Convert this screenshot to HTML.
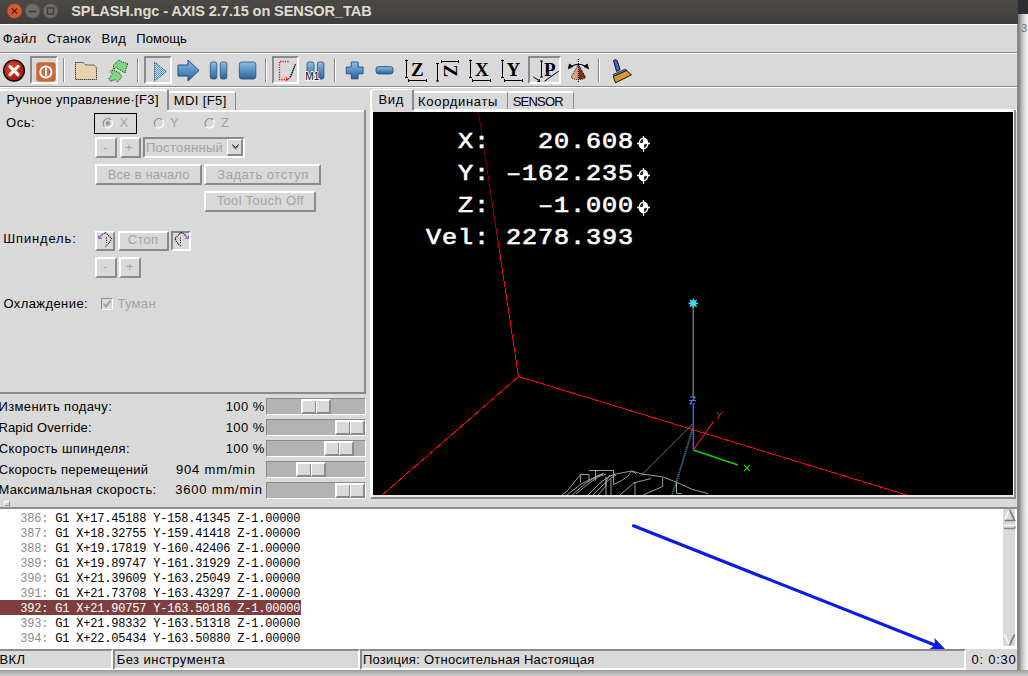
<!DOCTYPE html>
<html><head><meta charset="utf-8">
<style>
*{margin:0;padding:0;box-sizing:border-box}
html,body{width:1028px;height:676px;overflow:hidden;background:#d9d9d9;font-family:"Liberation Sans",sans-serif;font-size:13px;color:#000}
.a{position:absolute}
.t{position:absolute;white-space:pre;line-height:1}
svg{position:absolute;overflow:visible}
</style></head><body>
<div class="a" style="left:0px;top:0px;width:1018px;height:24px;background:linear-gradient(180deg,#4a4945 0,#454440 50%,#3e3d39 100%);"></div>
<svg class="a" style="left:0;top:0" width="80" height="24"><circle cx="14.5" cy="11" r="7.3" fill="#d65a30" stroke="#a8401c" stroke-width="0.6"/><path d="M11.8 8.3l5.4 5.4M17.2 8.3l-5.4 5.4" stroke="#3a1a10" stroke-width="1.2"/><circle cx="32.5" cy="11" r="7.3" fill="#6c6b67" stroke="#555450" stroke-width="0.6"/><path d="M29 11.5h7" stroke="#3c3b37" stroke-width="1.6"/><circle cx="50.5" cy="11" r="7.3" fill="#6c6b67" stroke="#555450" stroke-width="0.6"/><rect x="47.5" y="8" width="6" height="6" fill="none" stroke="#3c3b37" stroke-width="1.3"/></svg>
<div class="t" style="left:71.20px;top:3.64px;font-size:14.6px;color:#dfdbd2;font-weight:700;letter-spacing:-0.119px;">SPLASH.ngc - AXIS 2.7.15 on SENSOR_TAB</div>
<div class="a" style="left:0px;top:24px;width:1018px;height:1px;background:#fff;"></div>
<div class="a" style="left:0px;top:25px;width:1018px;height:27px;background:#d9d9d9;"></div>
<div class="a" style="left:0px;top:52px;width:1018px;height:1px;background:#8a8a8a;"></div>
<div class="t" style="left:2.80px;top:31.99px;font-size:13px;color:#000;letter-spacing:0.500px;">Файл</div>
<div class="t" style="left:46.70px;top:31.99px;font-size:13px;color:#000;letter-spacing:0.260px;">Станок</div>
<div class="t" style="left:101.50px;top:31.99px;font-size:13px;color:#000;letter-spacing:0.350px;">Вид</div>
<div class="t" style="left:136.20px;top:31.99px;font-size:13px;color:#000;letter-spacing:0.100px;">Помощь</div>
<div class="a" style="left:0px;top:53px;width:1018px;height:1px;background:#fff;"></div>
<div class="a" style="left:0px;top:86px;width:1018px;height:1px;background:#8a8a8a;"></div>
<div class="a" style="left:0px;top:87px;width:1018px;height:1px;background:#fff;"></div>
<div class="a" style="left:63px;top:58px;width:1px;height:24px;background:#8a8a8a;"></div>
<div class="a" style="left:64px;top:58px;width:1px;height:24px;background:#fff;"></div>
<div class="a" style="left:137px;top:58px;width:1px;height:24px;background:#8a8a8a;"></div>
<div class="a" style="left:138px;top:58px;width:1px;height:24px;background:#fff;"></div>
<div class="a" style="left:265px;top:58px;width:1px;height:24px;background:#8a8a8a;"></div>
<div class="a" style="left:266px;top:58px;width:1px;height:24px;background:#fff;"></div>
<div class="a" style="left:334px;top:58px;width:1px;height:24px;background:#8a8a8a;"></div>
<div class="a" style="left:335px;top:58px;width:1px;height:24px;background:#fff;"></div>
<div class="a" style="left:598px;top:58px;width:1px;height:24px;background:#8a8a8a;"></div>
<div class="a" style="left:599px;top:58px;width:1px;height:24px;background:#fff;"></div>
<div class="a" style="left:30px;top:56px;width:28px;height:28px;border-style:solid;border-width:2px;border-color:#8a8a8a #fff #fff #8a8a8a;"></div>
<div class="a" style="left:144px;top:56px;width:28px;height:28px;border-style:solid;border-width:2px;border-color:#8a8a8a #fff #fff #8a8a8a;"></div>
<div class="a" style="left:272px;top:56px;width:27px;height:28px;border-style:solid;border-width:2px;border-color:#8a8a8a #fff #fff #8a8a8a;"></div>
<div class="a" style="left:528px;top:56px;width:33px;height:28px;border-style:solid;border-width:2px;border-color:#8a8a8a #fff #fff #8a8a8a;"></div>
<svg style="left:0;top:0" width="640" height="90">
<defs>
<linearGradient id="gblue" x1="0" y1="0" x2="0" y2="1"><stop offset="0" stop-color="#8cc0e6"/><stop offset="1" stop-color="#2a6199"/></linearGradient>
<radialGradient id="gred" cx="0.4" cy="0.35" r="0.7"><stop offset="0" stop-color="#e83a2a"/><stop offset="1" stop-color="#9a1a10"/></radialGradient>
<linearGradient id="gcone" x1="0" y1="0" x2="1" y2="0"><stop offset="0" stop-color="#f0b090"/><stop offset="0.5" stop-color="#c86040"/><stop offset="1" stop-color="#702010"/></linearGradient>
<pattern id="pdot" width="2" height="2" patternUnits="userSpaceOnUse"><rect width="1" height="1" fill="#4a98d0"/><rect x="1" y="1" width="1" height="1" fill="#4a98d0"/></pattern>
</defs>
<circle cx="14" cy="70.6" r="10.4" fill="url(#gred)" stroke="#000" stroke-width="1.3"/>
<path d="M10 66.5l8 8.2M18 66.5l-8 8.2" stroke="#fff" stroke-width="3.2" stroke-linecap="round"/>
<rect x="36.2" y="62.2" width="19.5" height="19.5" rx="3" fill="#c9683c"/>
<circle cx="45.9" cy="72" r="5.6" fill="none" stroke="#fff" stroke-width="1.9"/>
<path d="M45.9 67.5v8.5" stroke="#fff" stroke-width="1.9"/>
<path d="M75.5 62.5h7.5l3 2.5h8l2.5 3v11.5h-21z" fill="#e6d2b0" stroke="#000" stroke-width="1" stroke-dasharray="1 1"/>
<path d="M113.5 65l5.5-5 3 2 6 1.5 -1.5 3.5 -1.5 6 -4-2.5 -3.5-2 -1 -1.5 -3 2.5z" fill="#7ed87e" stroke="#000" stroke-width="0.9" stroke-dasharray="0.9 1.1"/>
<path d="M109 78.5l3.5-4.5 -2.5-2.5 1.5-1.5 4 1 4.5 2.5 2 3.5 -4.5 5 -2.5-2.5 -4 2z" fill="#7ed87e" stroke="#000" stroke-width="0.9" stroke-dasharray="0.9 1.1"/>
<path d="M154.5 62l11.8 9.5 -11.8 9.8z" fill="url(#pdot)" stroke="#1a4570" stroke-width="1" stroke-dasharray="1 1"/>
<path d="M178 65h10v-5l11 10.5 -11 10.5v-5h-10z" fill="url(#gblue)" stroke="#1d4f80" stroke-width="1"/>
<rect x="210.3" y="62" width="6.5" height="17" rx="2" fill="url(#gblue)" stroke="#1d4f80" stroke-width="0.8"/>
<rect x="220.3" y="62" width="6.5" height="17" rx="2" fill="url(#gblue)" stroke="#1d4f80" stroke-width="0.8"/>
<rect x="239.3" y="62" width="16.5" height="17" rx="2.5" fill="url(#gblue)" stroke="#1d4f80" stroke-width="0.8"/>
<path d="M288.5 61.5h-9v18h8.5l1.5-1.5" fill="none" stroke="#f00" stroke-width="1.3" stroke-dasharray="1.2 1.2"/>
<path d="M285.5 76.8l2.5 2.6 -2.3 1.3" fill="none" stroke="#f00" stroke-width="1"/>
<path d="M295.5 64.2l-5.5 13.7" stroke="#000" stroke-width="1.4" stroke-dasharray="1.5 0.6"/>
<rect x="307" y="62" width="7" height="17" rx="2" fill="url(#gblue)" stroke="#1d4f80" stroke-width="0.8"/>
<rect x="317.4" y="62" width="6.5" height="17" rx="2" fill="url(#gblue)" stroke="#1d4f80" stroke-width="0.8"/>
<text x="305.3" y="79.8" font-family="Liberation Sans" font-size="10" fill="#000" stroke="#fff" stroke-width="1.6" paint-order="stroke">M1</text>
<path d="M351.3 62h6.8v5h5v6.8h-5v5h-6.8v-5h-5v-6.8h5z" fill="url(#gblue)" stroke="#1d4f80" stroke-width="0.9"/>
<rect x="376" y="66.7" width="17" height="7.2" rx="2.5" fill="url(#gblue)" stroke="#1d4f80" stroke-width="0.9"/>
<g stroke="#000" stroke-width="1" fill="none">
<path d="M406.5 59.7v17.7M405 60.5h3M405 77.5h3M408 80.5h18.5M408.5 79v3M426.5 79v3"/>
<path d="M437.5 63v18.5M436 63.5h3M436 81h3M441 61.5h17.5M441.5 60v3M458.5 60v3"/>
<path d="M470.5 59.7v17.7M469 60.5h3M469 77.5h3M472 80.5h18.5M472.5 79v3M490.5 79v3"/>
<path d="M502.5 59.7v17.7M501 60.5h3M501 77.5h3M504 80.5h19M504.5 79v3M522.5 79v3"/>
<path d="M541.5 61v16M540 61h3M540 77h3"/>
<path d="M533.5 77l6.5 4.2M537 81.5h3l-1-2.5M544.5 81.2l14.2-10"/>
</g>
<g font-family="Liberation Serif" font-weight="bold" fill="#000" font-size="19">
<text x="411" y="75.6">Z</text>
<text x="475" y="75.6">X</text>
<text x="506.5" y="75.6">Y</text>
<text x="544" y="75.6">P</text>
<text x="0" y="0" transform="translate(443.5,64.5) rotate(90)">Z</text>
</g>
<path d="M578.4 64.4L571.3 77a7.1 2.6 0 0 0 7.1 2.6z" fill="#e0a080"/>
<path d="M578.4 64.4L585.5 77a7.1 2.6 0 0 1 -7.1 2.6z" fill="#8a2a10"/>
<path d="M578.4 64.4L571.3 77a7.1 2.6 0 0 0 14.2 0z" fill="none" stroke="#000" stroke-width="0.9" stroke-dasharray="1 1"/>
<path d="M578.4 59v24" stroke="#000" stroke-width="1.1" stroke-dasharray="1 1"/>
<path d="M571.5 66.5q7-4.5 14 0" fill="none" stroke="#000" stroke-width="1.1"/>
<path d="M568.3 68.8l1.2-4.8 3.4 2.6z M588.5 68.8l-1.2-4.8 -3.4 2.6z" fill="#000" stroke="#000" stroke-width="0.8"/>
<path d="M613.5 60.5q1.8-1.6 3.6 0l3 9 -3.5 2z" fill="#3a6fd0" stroke="#000" stroke-width="0.9"/>
<path d="M613 74.5l12.5-5.5 1.5 1.5 -13 6z" fill="#4a8ae0" stroke="#000" stroke-width="0.6"/>
<path d="M613.3 76.5l13.2-6 5 4.3 -16 8z" fill="#d8982c" stroke="#000" stroke-width="0.9"/>
</svg>
<div class="a" style="left:167px;top:110px;width:198px;height:2px;background:#fff;"></div>
<div class="a" style="left:364px;top:110px;width:2px;height:284px;background:#8a8a8a;"></div>
<div class="a" style="left:0px;top:392px;width:366px;height:2px;background:#8a8a8a;"></div>
<div class="a" style="left:169px;top:91px;width:67px;height:19px;border-top:2px solid #fff;border-right:1px solid #8a8a8a;border-top-right-radius:3px;"></div>
<div class="a" style="left:0px;top:89px;width:167px;height:21px;border-top:2px solid #fff;border-top-right-radius:3px;"></div>
<div class="a" style="left:167px;top:90px;width:2px;height:20px;background:#8a8a8a;"></div>
<div class="t" style="left:6.50px;top:92.89px;font-size:13px;color:#000;letter-spacing:0.333px;">Ручное управление·[F3]</div>
<div class="t" style="left:173.80px;top:93.99px;font-size:13px;color:#000;letter-spacing:0.386px;">MDI [F5]</div>
<div class="t" style="left:6.00px;top:116.49px;font-size:13px;color:#000;letter-spacing:0.567px;">Ось:</div>
<div class="a" style="left:94px;top:113px;width:43px;height:21px;border:1.5px solid #000;"></div>
<svg style="left:0;top:0" width="370" height="320">
<g fill="none" stroke-width="1.2"><path d="M104.41 126.69A4.8 4.8 0 0 1 111.19 119.91" stroke="#8a8a8a"/><path d="M111.19 119.91A4.8 4.8 0 0 1 104.41 126.69" stroke="#fff"/><path d="M155.51 126.69A4.8 4.8 0 0 1 162.29 119.91" stroke="#8a8a8a"/><path d="M162.29 119.91A4.8 4.8 0 0 1 155.51 126.69" stroke="#fff"/><path d="M206.31 126.69A4.8 4.8 0 0 1 213.09 119.91" stroke="#8a8a8a"/><path d="M213.09 119.91A4.8 4.8 0 0 1 206.31 126.69" stroke="#fff"/></g>
<circle cx="107.8" cy="123.3" r="2.2" fill="#9a9a9a"/>
</svg>
<div class="t" style="left:119.60px;top:116.49px;font-size:13px;color:#a3a3a3;">X</div>
<div class="t" style="left:170.00px;top:116.49px;font-size:13px;color:#a3a3a3;">Y</div>
<div class="t" style="left:220.90px;top:116.49px;font-size:13px;color:#a3a3a3;">Z</div>
<div class="a" style="left:95px;top:137px;width:22px;height:21px;border-style:solid;border-width:2px;border-color:#fff #8a8a8a #8a8a8a #fff;"></div>
<div class="a" style="left:120px;top:137px;width:21px;height:21px;border-style:solid;border-width:2px;border-color:#fff #8a8a8a #8a8a8a #fff;"></div>
<div class="t" style="left:102.90px;top:140.59px;font-size:13px;color:#a3a3a3;">-</div>
<div class="t" style="left:124.90px;top:140.59px;font-size:13px;color:#a3a3a3;">+</div>
<div class="a" style="left:143px;top:137px;width:102px;height:21px;border-style:solid;border-width:2px;border-color:#8a8a8a #fff #fff #8a8a8a;"></div>
<div class="t" style="left:145.90px;top:140.59px;font-size:13px;color:#a3a3a3;letter-spacing:0.311px;">Постоянный</div>
<div class="a" style="left:227px;top:139px;width:16px;height:17px;border-style:solid;border-width:1px 2px 2px 1px;border-color:#fff #8a8a8a #8a8a8a #fff;"></div>
<svg style="left:0;top:0" width="260" height="160"><path d="M232 144.5l3.5 2.8 3.5-2.8M233 146.5l2.5 2.3 2.5-2.3" fill="none" stroke="#000" stroke-width="0.8"/></svg>
<div class="a" style="left:95px;top:164px;width:107px;height:21px;border-style:solid;border-width:2px;border-color:#fff #8a8a8a #8a8a8a #fff;"></div>
<div class="t" style="left:107.70px;top:167.59px;font-size:13px;color:#a3a3a3;letter-spacing:0.200px;">Все в начало</div>
<div class="a" style="left:204px;top:164px;width:117px;height:21px;border-style:solid;border-width:2px;border-color:#fff #8a8a8a #8a8a8a #fff;"></div>
<div class="t" style="left:217.30px;top:167.69px;font-size:13px;color:#a3a3a3;letter-spacing:0.517px;">Задать отступ</div>
<div class="a" style="left:204px;top:191px;width:112px;height:21px;border-style:solid;border-width:2px;border-color:#fff #8a8a8a #8a8a8a #fff;"></div>
<div class="t" style="left:216.70px;top:194.19px;font-size:13px;color:#a3a3a3;letter-spacing:0.338px;">Tool Touch Off</div>
<div class="t" style="left:3.30px;top:232.29px;font-size:13px;color:#000;letter-spacing:0.838px;">Шпиндель:</div>
<div class="a" style="left:95px;top:231px;width:20px;height:20px;border-style:solid;border-width:2px;border-color:#fff #8a8a8a #8a8a8a #fff;"></div>
<div class="a" style="left:118px;top:231px;width:51px;height:20px;border-style:solid;border-width:2px;border-color:#fff #8a8a8a #8a8a8a #fff;"></div>
<div class="t" style="left:127.80px;top:233.29px;font-size:13px;color:#a3a3a3;letter-spacing:0.267px;">Стоп</div>
<div class="a" style="left:171px;top:231px;width:20px;height:20px;border-style:solid;border-width:2px;border-color:#8a8a8a #fff #fff #8a8a8a;"></div>
<svg style="left:0;top:0" width="200" height="260">
<path d="M102 234.5L105.5 232.5L111.5 238.5L110 242L105.5 246.5" fill="none" stroke="#000" stroke-width="1.1" stroke-dasharray="1.1 0.9"/>
<path d="M98.5 238.5L102.5 234.5M98.5 238.5h3.5M98.5 238.5v-3" fill="none" stroke="#9a5cc0" stroke-width="1.1"/>
<path d="M106.5 237.5v6.5" stroke="#000" stroke-width="1.1" stroke-dasharray="1.1 1.1"/>
<path d="M185.5 234.5L181 232.5L175 238.5L176.5 242L181 246.5" fill="none" stroke="#000" stroke-width="1.1" stroke-dasharray="1.1 0.9"/>
<path d="M188.5 238.5L184 234.5M188.5 238.5h-3.5M188.5 238.5v-3" fill="none" stroke="#9a5cc0" stroke-width="1.1"/>
<path d="M180.5 237.5v6.5" stroke="#000" stroke-width="1.1" stroke-dasharray="1.1 1.1"/>
</svg>
<div class="a" style="left:95px;top:257px;width:22px;height:21px;border-style:solid;border-width:2px;border-color:#fff #8a8a8a #8a8a8a #fff;"></div>
<div class="a" style="left:119px;top:257px;width:22px;height:21px;border-style:solid;border-width:2px;border-color:#fff #8a8a8a #8a8a8a #fff;"></div>
<div class="t" style="left:102.90px;top:259.59px;font-size:13px;color:#a3a3a3;">-</div>
<div class="t" style="left:125.90px;top:259.59px;font-size:13px;color:#a3a3a3;">+</div>
<div class="t" style="left:3.40px;top:296.99px;font-size:13px;color:#000;letter-spacing:0.420px;">Охлаждение:</div>
<div class="a" style="left:101px;top:298px;width:12px;height:12px;border-style:solid;border-width:1px;border-color:#8a8a8a #fff #fff #8a8a8a;"></div>
<svg style="left:0;top:0" width="130" height="320"><path d="M103.5 303.5l2.5 3 4.5-6" fill="none" stroke="#9a9a9a" stroke-width="1.6"/></svg>
<div class="t" style="left:117.40px;top:296.99px;font-size:13px;color:#a3a3a3;letter-spacing:0.325px;">Туман</div>
<div class="t" style="left:-1.60px;top:400.29px;font-size:13px;color:#000;letter-spacing:0.380px;">Изменить подачу:</div>
<div class="t" style="left:225.70px;top:400.29px;font-size:13px;color:#000;letter-spacing:0.425px;">100 %</div>
<div class="a" style="left:266px;top:398px;width:100px;height:17px;background:#b3b3b3;border-style:solid;border-width:1px;border-color:#8a8a8a #fff #fff #8a8a8a;"></div>
<div class="a" style="left:301px;top:399px;width:30px;height:15px;background:#d9d9d9;border-style:solid;border-width:2px;border-color:#fff #8a8a8a #8a8a8a #fff;"></div>
<div class="a" style="left:315px;top:401px;width:1px;height:12px;background:#8a8a8a;"></div>
<div class="a" style="left:316px;top:401px;width:1px;height:12px;background:#fff;"></div>
<div class="t" style="left:-1.60px;top:421.04px;font-size:13px;color:#000;letter-spacing:0.150px;">Rapid Override:</div>
<div class="t" style="left:225.70px;top:421.04px;font-size:13px;color:#000;letter-spacing:0.425px;">100 %</div>
<div class="a" style="left:266px;top:419px;width:100px;height:17px;background:#b3b3b3;border-style:solid;border-width:1px;border-color:#8a8a8a #fff #fff #8a8a8a;"></div>
<div class="a" style="left:335px;top:420px;width:30px;height:15px;background:#d9d9d9;border-style:solid;border-width:2px;border-color:#fff #8a8a8a #8a8a8a #fff;"></div>
<div class="a" style="left:349px;top:422px;width:1px;height:12px;background:#8a8a8a;"></div>
<div class="a" style="left:350px;top:422px;width:1px;height:12px;background:#fff;"></div>
<div class="t" style="left:-1.20px;top:441.79px;font-size:13px;color:#000;letter-spacing:0.382px;">Скорость шпинделя:</div>
<div class="t" style="left:225.70px;top:441.79px;font-size:13px;color:#000;letter-spacing:0.425px;">100 %</div>
<div class="a" style="left:266px;top:440px;width:100px;height:17px;background:#b3b3b3;border-style:solid;border-width:1px;border-color:#8a8a8a #fff #fff #8a8a8a;"></div>
<div class="a" style="left:324px;top:441px;width:30px;height:15px;background:#d9d9d9;border-style:solid;border-width:2px;border-color:#fff #8a8a8a #8a8a8a #fff;"></div>
<div class="a" style="left:338px;top:443px;width:1px;height:12px;background:#8a8a8a;"></div>
<div class="a" style="left:339px;top:443px;width:1px;height:12px;background:#fff;"></div>
<div class="t" style="left:-1.20px;top:462.54px;font-size:13px;color:#000;letter-spacing:0.263px;">Скорость перемещений</div>
<div class="t" style="left:175.90px;top:462.54px;font-size:13px;color:#000;letter-spacing:0.844px;">904 mm/min</div>
<div class="a" style="left:266px;top:461px;width:100px;height:17px;background:#b3b3b3;border-style:solid;border-width:1px;border-color:#8a8a8a #fff #fff #8a8a8a;"></div>
<div class="a" style="left:296px;top:462px;width:30px;height:15px;background:#d9d9d9;border-style:solid;border-width:2px;border-color:#fff #8a8a8a #8a8a8a #fff;"></div>
<div class="a" style="left:310px;top:464px;width:1px;height:12px;background:#8a8a8a;"></div>
<div class="a" style="left:311px;top:464px;width:1px;height:12px;background:#fff;"></div>
<div class="t" style="left:-1.60px;top:483.29px;font-size:13px;color:#000;letter-spacing:0.357px;">Максимальная скорость:</div>
<div class="t" style="left:175.20px;top:483.29px;font-size:13px;color:#000;letter-spacing:0.810px;">3600 mm/min</div>
<div class="a" style="left:266px;top:482px;width:100px;height:17px;background:#b3b3b3;border-style:solid;border-width:1px;border-color:#8a8a8a #fff #fff #8a8a8a;"></div>
<div class="a" style="left:335px;top:483px;width:30px;height:15px;background:#d9d9d9;border-style:solid;border-width:2px;border-color:#fff #8a8a8a #8a8a8a #fff;"></div>
<div class="a" style="left:349px;top:485px;width:1px;height:12px;background:#8a8a8a;"></div>
<div class="a" style="left:350px;top:485px;width:1px;height:12px;background:#fff;"></div>
<div class="a" style="left:4px;top:501px;width:6px;height:5px;border-style:solid;border-width:1px;border-color:#fff #8a8a8a #8a8a8a #fff;"></div>
<div class="a" style="left:414px;top:91px;width:94px;height:19px;border-top:2px solid #fff;border-right:1px solid #8a8a8a;border-top-right-radius:3px;"></div>
<div class="a" style="left:508px;top:91px;width:66px;height:19px;border-top:2px solid #fff;border-right:1px solid #8a8a8a;border-top-right-radius:3px;"></div>
<div class="a" style="left:414px;top:109px;width:604px;height:3px;background:#fff;"></div>
<div class="a" style="left:370px;top:89px;width:42px;height:21px;border-top:1px solid #fff;border-left:2px solid #fff;border-top-left-radius:4px;"></div>
<div class="a" style="left:412px;top:90px;width:2px;height:20px;background:#8a8a8a;"></div>
<div class="a" style="left:370px;top:109px;width:3px;height:389px;background:#fff;"></div>
<div class="a" style="left:373px;top:112px;width:640px;height:383px;background:#000;"></div>
<div class="a" style="left:373px;top:495px;width:641px;height:2px;background:#e6e6e6;"></div>
<div class="a" style="left:1013px;top:112px;width:1px;height:385px;background:#fff;"></div>
<div class="a" style="left:1014px;top:110px;width:2px;height:389px;background:#8a8a8a;"></div>
<div class="a" style="left:371px;top:497px;width:645px;height:2px;background:#8a8a8a;"></div>
<div class="t" style="left:378.60px;top:93.29px;font-size:13px;color:#000;letter-spacing:0.600px;">Вид</div>
<div class="t" style="left:418.10px;top:94.79px;font-size:13px;color:#000;letter-spacing:0.678px;">Координаты</div>
<div class="t" style="left:512.70px;top:94.79px;font-size:13px;color:#000;letter-spacing:-0.800px;">SENSOR</div>
<svg style="left:373px;top:112px;overflow:hidden" width="640" height="383" viewBox="373 112 640 383">
<defs><linearGradient id="gredline" gradientUnits="userSpaceOnUse" x1="0" y1="112" x2="0" y2="380"><stop offset="0" stop-color="#5a0000"/><stop offset="0.4" stop-color="#8a0000"/><stop offset="0.55" stop-color="#ff0000"/><stop offset="1" stop-color="#ff0000"/></linearGradient></defs>
<path d="M478.3 111L518.5 376.5" stroke="url(#gredline)" stroke-width="1" fill="none" shape-rendering="crispEdges"/>
<path d="M381 496L518.5 376.5L910 496" stroke="#f00" stroke-width="1" fill="none" shape-rendering="crispEdges"/>
<path d="M693.3 305V398" stroke="#5f6c70" stroke-width="1.6"/>
<g stroke="#40d8f8" stroke-width="1.3"><path d="M688.5 303.3h9.6M693.3 298.5v9.6M689.9 299.9l6.8 6.8M696.7 299.9l-6.8 6.8"/></g><circle cx="693.3" cy="303.3" r="3.2" fill="#40d8f8"/>
<path d="M693.3 405V450" stroke="#3a6ae0" stroke-width="1.4"/>
<path d="M693.3 450L738 465" stroke="#10d010" stroke-width="1.4"/>
<path d="M693.3 450L713.5 421.5" stroke="#e82020" stroke-width="1.2"/>
<path d="M690 397h5l-5 7h5M689 400.5h7" fill="none" stroke="#4a7ae8" stroke-width="1.2"/>
<path d="M717 412l2.5 3.5 3-4M719.5 415.5l-1.5 3.5" fill="none" stroke="#e03030" stroke-width="1"/>
<path d="M744 465l6 6M750 465l-6 6" fill="none" stroke="#20d020" stroke-width="1.1"/>
<path d="M692.5 424L640.5 476" stroke="#8a9090" stroke-width="0.8"/>
<path d="M693 428L672 496" stroke="#4a6878" stroke-width="2" stroke-dasharray="1.3 0.7"/>
<g stroke="#c4c4c4" stroke-width="0.8" fill="none">
<path d="M580.5 474.5h8.5v6M589 470.5h24.5v14M595.5 470.5v10M580.5 474.5v8"/>
<path d="M562 495l6-5 12.5-15.5"/>
<path d="M567 495l14-11 8-4 8-4 6-2"/>
<path d="M572 495l14-12 10-6 8-4"/>
<path d="M576 494l12-10 10-7 8-3"/>
<path d="M588 495l12-12 8-6 7-3"/>
<path d="M593 495l10-10 8-7 5-3"/>
<path d="M598 495l8-9v-9M606 495v-14l4-6M611 495v-16"/>
<path d="M613.5 484.5l8-4 6-4 4-5 3 1 2 2"/>
<path d="M613.5 474.5l10-2 8-1.5 10.5 3 11 1.5 10 1.5 13 5 16.5 7.5 15.5 4"/>
<path d="M662.7 478v8.5l-19.5 8.5"/>
<path d="M676.5 483v10.5h5"/>
<path d="M634.7 482.6l16.3-4"/>
<path d="M620 495l15-13v13"/>
</g>
</svg>
<div class="t" style="left:426px;top:130.76px;font-family:'Liberation Mono',monospace;font-weight:400;font-size:22.9px;letter-spacing:0.805px;color:#fff;transform:scaleX(1.1);transform-origin:0 0;-webkit-text-stroke:0.7px #fff">  X:   20.608</div>
<div class="t" style="left:426px;top:162.76px;font-family:'Liberation Mono',monospace;font-weight:400;font-size:22.9px;letter-spacing:0.805px;color:#fff;transform:scaleX(1.1);transform-origin:0 0;-webkit-text-stroke:0.7px #fff">  Y: –162.235</div>
<div class="t" style="left:426px;top:194.76px;font-family:'Liberation Mono',monospace;font-weight:400;font-size:22.9px;letter-spacing:0.805px;color:#fff;transform:scaleX(1.1);transform-origin:0 0;-webkit-text-stroke:0.7px #fff">  Z:   –1.000</div>
<div class="t" style="left:426px;top:226.76px;font-family:'Liberation Mono',monospace;font-weight:400;font-size:22.9px;letter-spacing:0.805px;color:#fff;transform:scaleX(1.1);transform-origin:0 0;-webkit-text-stroke:0.7px #fff">Vel: 2278.393</div>
<svg style="left:0;top:0" width="660" height="220">
<ellipse cx="643.5" cy="143.5" rx="4.3" ry="5.3" fill="none" stroke="#fff" stroke-width="1.3"/><path d="M637.0 143.5h13M643.5 135.9v15.8" stroke="#fff" stroke-width="1.3"/><path d="M643.5 143.5V138.2A4.3 5.3 0 0 1 647.8 143.5zM643.5 143.5V148.8A4.3 5.3 0 0 1 639.2 143.5z" fill="#fff"/>
<ellipse cx="643.5" cy="175.5" rx="4.3" ry="5.3" fill="none" stroke="#fff" stroke-width="1.3"/><path d="M637.0 175.5h13M643.5 167.9v15.8" stroke="#fff" stroke-width="1.3"/><path d="M643.5 175.5V170.2A4.3 5.3 0 0 1 647.8 175.5zM643.5 175.5V180.8A4.3 5.3 0 0 1 639.2 175.5z" fill="#fff"/>
<ellipse cx="643.5" cy="207.5" rx="4.3" ry="5.3" fill="none" stroke="#fff" stroke-width="1.3"/><path d="M637.0 207.5h13M643.5 199.9v15.8" stroke="#fff" stroke-width="1.3"/><path d="M643.5 207.5V202.2A4.3 5.3 0 0 1 647.8 207.5zM643.5 207.5V212.8A4.3 5.3 0 0 1 639.2 207.5z" fill="#fff"/>
</svg>
<div class="a" style="left:0px;top:507px;width:1018px;height:2px;background:#8a8a8a;"></div>
<div class="a" style="left:0px;top:509px;width:1018px;height:140px;background:#fff;"></div>
<div class="a" style="left:0px;top:600px;width:301px;height:15px;background:#7f3e3e;"></div>
<div class="t" style="left:20.3px;top:513.11px;font-family:'Liberation Mono',monospace;font-size:12px;letter-spacing:-0.200px;color:#8c8c8c">386:<span style="color:#000"> G1 X+17.45188 Y-158.41345 Z-1.00000</span></div>
<div class="t" style="left:20.3px;top:528.11px;font-family:'Liberation Mono',monospace;font-size:12px;letter-spacing:-0.200px;color:#8c8c8c">387:<span style="color:#000"> G1 X+18.32755 Y-159.41418 Z-1.00000</span></div>
<div class="t" style="left:20.3px;top:543.11px;font-family:'Liberation Mono',monospace;font-size:12px;letter-spacing:-0.200px;color:#8c8c8c">388:<span style="color:#000"> G1 X+19.17819 Y-160.42406 Z-1.00000</span></div>
<div class="t" style="left:20.3px;top:558.11px;font-family:'Liberation Mono',monospace;font-size:12px;letter-spacing:-0.200px;color:#8c8c8c">389:<span style="color:#000"> G1 X+19.89747 Y-161.31929 Z-1.00000</span></div>
<div class="t" style="left:20.3px;top:573.11px;font-family:'Liberation Mono',monospace;font-size:12px;letter-spacing:-0.200px;color:#8c8c8c">390:<span style="color:#000"> G1 X+21.39609 Y-163.25049 Z-1.00000</span></div>
<div class="t" style="left:20.3px;top:588.11px;font-family:'Liberation Mono',monospace;font-size:12px;letter-spacing:-0.200px;color:#8c8c8c">391:<span style="color:#000"> G1 X+21.73708 Y-163.43297 Z-1.00000</span></div>
<div class="t" style="left:20.3px;top:603.11px;font-family:'Liberation Mono',monospace;font-size:12px;letter-spacing:-0.200px;color:#fff">392:<span style="color:#fff"> G1 X+21.90757 Y-163.50186 Z-1.00000</span></div>
<div class="t" style="left:20.3px;top:618.11px;font-family:'Liberation Mono',monospace;font-size:12px;letter-spacing:-0.200px;color:#8c8c8c">393:<span style="color:#000"> G1 X+21.98332 Y-163.51318 Z-1.00000</span></div>
<div class="t" style="left:20.3px;top:633.11px;font-family:'Liberation Mono',monospace;font-size:12px;letter-spacing:-0.200px;color:#8c8c8c">394:<span style="color:#000"> G1 X+22.05434 Y-163.50880 Z-1.00000</span></div>
<div class="a" style="left:1003px;top:509px;width:12px;height:137px;background:#d9d9d9;"></div>
<svg style="left:0;top:0" width="1020" height="660">
<path d="M1004.5 520.5L1009.5 509.5" stroke="#fff" stroke-width="1.3"/>
<path d="M1009.5 509.5L1014.5 520.5H1004.5" fill="none" stroke="#7a7a7a" stroke-width="1.7"/>
<path d="M1004 525.5h11" stroke="#fff" stroke-width="1.3"/>
<path d="M1004 528.5h10.5l0.5-2" fill="none" stroke="#8a8a8a" stroke-width="1.6"/>
<path d="M1004.5 634.5L1009.5 645.5" fill="none" stroke="#fff" stroke-width="1.3"/>
<path d="M1009.5 645.5L1014.5 634.5" stroke="#7a7a7a" stroke-width="1.7"/>
</svg>
<svg style="left:0;top:0" width="1028" height="676">
<path d="M633.5 525.8L936 645.5" stroke="#0a1ae8" stroke-width="3.2" stroke-linecap="round"/>
<path d="M946 650L934.5 638L935 645L927 651z" fill="#0a1ae8"/>
</svg>
<div class="a" style="left:0px;top:649px;width:966px;height:2px;background:#8a8a8a;"></div>
<div class="a" style="left:-2px;top:649px;width:115px;height:21px;border-style:solid;border-width:2px;border-color:#8a8a8a #fff #fff #8a8a8a;"></div>
<div class="a" style="left:113px;top:649px;width:247px;height:21px;border-style:solid;border-width:2px;border-color:#8a8a8a #fff #fff #8a8a8a;"></div>
<div class="a" style="left:360px;top:649px;width:606px;height:21px;border-style:solid;border-width:2px;border-color:#8a8a8a #fff #fff #8a8a8a;"></div>
<div class="a" style="left:966px;top:649px;width:52px;height:21px;background:#d9d9d9;"></div>
<div class="t" style="left:-0.50px;top:652.59px;font-size:13px;color:#000;letter-spacing:0.400px;">ВКЛ</div>
<div class="t" style="left:116.70px;top:652.59px;font-size:13px;color:#000;letter-spacing:0.457px;">Без инструмента</div>
<div class="t" style="left:362.90px;top:652.79px;font-size:13px;color:#000;letter-spacing:0.268px;">Позиция: Относительная Настоящая</div>
<div class="t" style="left:971.50px;top:652.59px;font-size:13px;color:#000;letter-spacing:0.750px;">0: 0:30</div>
<div class="a" style="left:1018px;top:0;width:10px;height:676px;background:linear-gradient(90deg,#7c7c7c 0,#8a8a8a 15%,#a4a4a4 25%,#c4c4c4 45%,#dcdcdc 65%,#eeeeee 85%,#f2f2f2 100%)"></div>
<div class="a" style="left:1018px;top:0;width:10px;height:14px;background:#2e2e30"></div>
<div class="t" style="left:1021.10px;top:23.19px;font-size:11px;color:#6a6a6a;">3</div>
<div class="a" style="left:1017px;top:24px;width:1px;height:646px;background:#8a8a8a;"></div>
<div class="a" style="left:0;top:670px;width:1028px;height:6px;background:linear-gradient(180deg,#9a9a9a 0,#b4b4b4 50%,#d0d0d0 100%)"></div>
</body></html>
